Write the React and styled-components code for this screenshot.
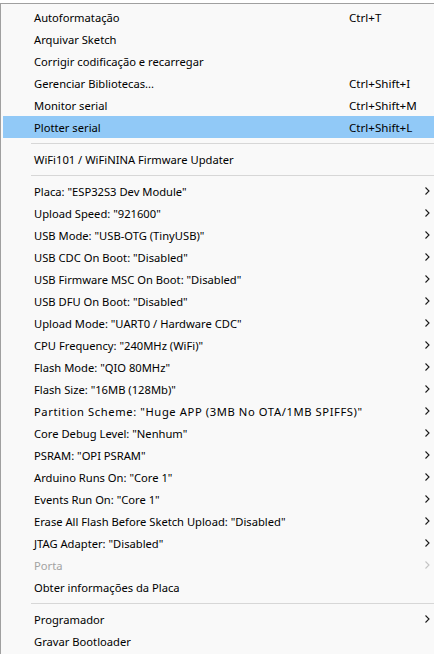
import styled, { createGlobalStyle } from 'styled-components';

const GlobalStyle = createGlobalStyle`
  html, body {
    margin: 0;
    padding: 0;
    background: #ffffff;
  }
  body {
    font-family: "Noto Sans", "Open Sans", sans-serif;
    font-size: 12px;
    color: #000000;
  }
`;

const ITEMS = [
  { label: 'Autoformatação', shortcut: 'Ctrl+T' },
  { label: 'Arquivar Sketch' },
  { label: 'Corrigir codificação e recarregar' },
  { label: 'Gerenciar Bibliotecas...', shortcut: 'Ctrl+Shift+I' },
  { label: 'Monitor serial', shortcut: 'Ctrl+Shift+M' },
  { label: 'Plotter serial', shortcut: 'Ctrl+Shift+L', active: true },
  { separator: true },
  { label: 'WiFi101 / WiFiNINA Firmware Updater' },
  { separator: true },
  { label: 'Placa: "ESP32S3 Dev Module"', submenu: true },
  { label: 'Upload Speed: "921600"', submenu: true },
  { label: 'USB Mode: "USB-OTG (TinyUSB)"', submenu: true },
  { label: 'USB CDC On Boot: "Disabled"', submenu: true },
  { label: 'USB Firmware MSC On Boot: "Disabled"', submenu: true },
  { label: 'USB DFU On Boot: "Disabled"', submenu: true },
  { label: 'Upload Mode: "UART0 / Hardware CDC"', submenu: true },
  { label: 'CPU Frequency: "240MHz (WiFi)"', submenu: true },
  { label: 'Flash Mode: "QIO 80MHz"', submenu: true },
  { label: 'Flash Size: "16MB (128Mb)"', submenu: true },
  { label: 'Partition Scheme: "Huge APP (3MB No OTA/1MB SPIFFS)"', submenu: true, wide: true },
  { label: 'Core Debug Level: "Nenhum"', submenu: true },
  { label: 'PSRAM: "OPI PSRAM"', submenu: true },
  { label: 'Arduino Runs On: "Core 1"', submenu: true },
  { label: 'Events Run On: "Core 1"', submenu: true },
  { label: 'Erase All Flash Before Sketch Upload: "Disabled"', submenu: true },
  { label: 'JTAG Adapter: "Disabled"', submenu: true },
  { label: 'Porta', submenu: true, disabled: true },
  { label: 'Obter informações da Placa' },
  { separator: true },
  { label: 'Programador', submenu: true },
  { label: 'Gravar Bootloader' },
];

const Chevron = ({ disabled }) => (
  <svg width="5" height="8" viewBox="0 0 5 8">
    <path
      d="M0.5 0.5 L4 4 L0.5 7.5"
      fill="none"
      stroke={disabled ? '#c4c4c4' : '#1a1a1a'}
      strokeWidth="1.1"
    />
  </svg>
);

const App = () => (
  <>
    <GlobalStyle />
    <Page>
      <Menu>
        {ITEMS.map((item, i) =>
          item.separator ? (
            <Separator key={i} />
          ) : (
            <Row key={i} $active={item.active} $disabled={item.disabled}>
              <Label $wide={item.wide}>{item.label}</Label>
              <Shortcut>{item.shortcut}</Shortcut>
              <Arrow>{item.submenu && <Chevron disabled={item.disabled} />}</Arrow>
            </Row>
          )
        )}
      </Menu>
    </Page>
  </>
);

export default App;

const Page = styled.div`
  padding-top: 3px;
  width: 434px;
  height: 651px;
  overflow: hidden;
`;

const Menu = styled.div`
  display: flex;
  flex-direction: column;
  background: #f9f9f9;
  border-top: 1px solid #a0a0a0;
  border-left: 1px solid #a0a0a0;
  padding: 2px 0 0 2px;
  height: 100%;
`;

const Row = styled.div`
  display: grid;
  grid-template-columns: minmax(0, 1fr) 76px 9px;
  align-items: center;
  height: 22px;
  padding-left: 31px;
  white-space: nowrap;
  background: ${({ $active }) => ($active ? '#91c9f7' : 'transparent')};
  color: ${({ $disabled }) => ($disabled ? '#a3a3a3' : '#000000')};
`;

const Label = styled.span`
  font-size: 11.2px;
  overflow: visible;
  letter-spacing: ${({ $wide }) => ($wide ? '0.6px' : '0')};
`;

const Shortcut = styled.span`
  font-size: 11.6px;
`;

const Arrow = styled.span`
  display: flex;
  align-items: center;
  height: 100%;
`;

const Separator = styled.div`
  height: 10px;
  margin-left: 28px;
  display: flex;
  align-items: center;
  &::after {
    content: '';
    flex: 1;
    height: 1px;
    background: #d7d7d7;
  }
`;
